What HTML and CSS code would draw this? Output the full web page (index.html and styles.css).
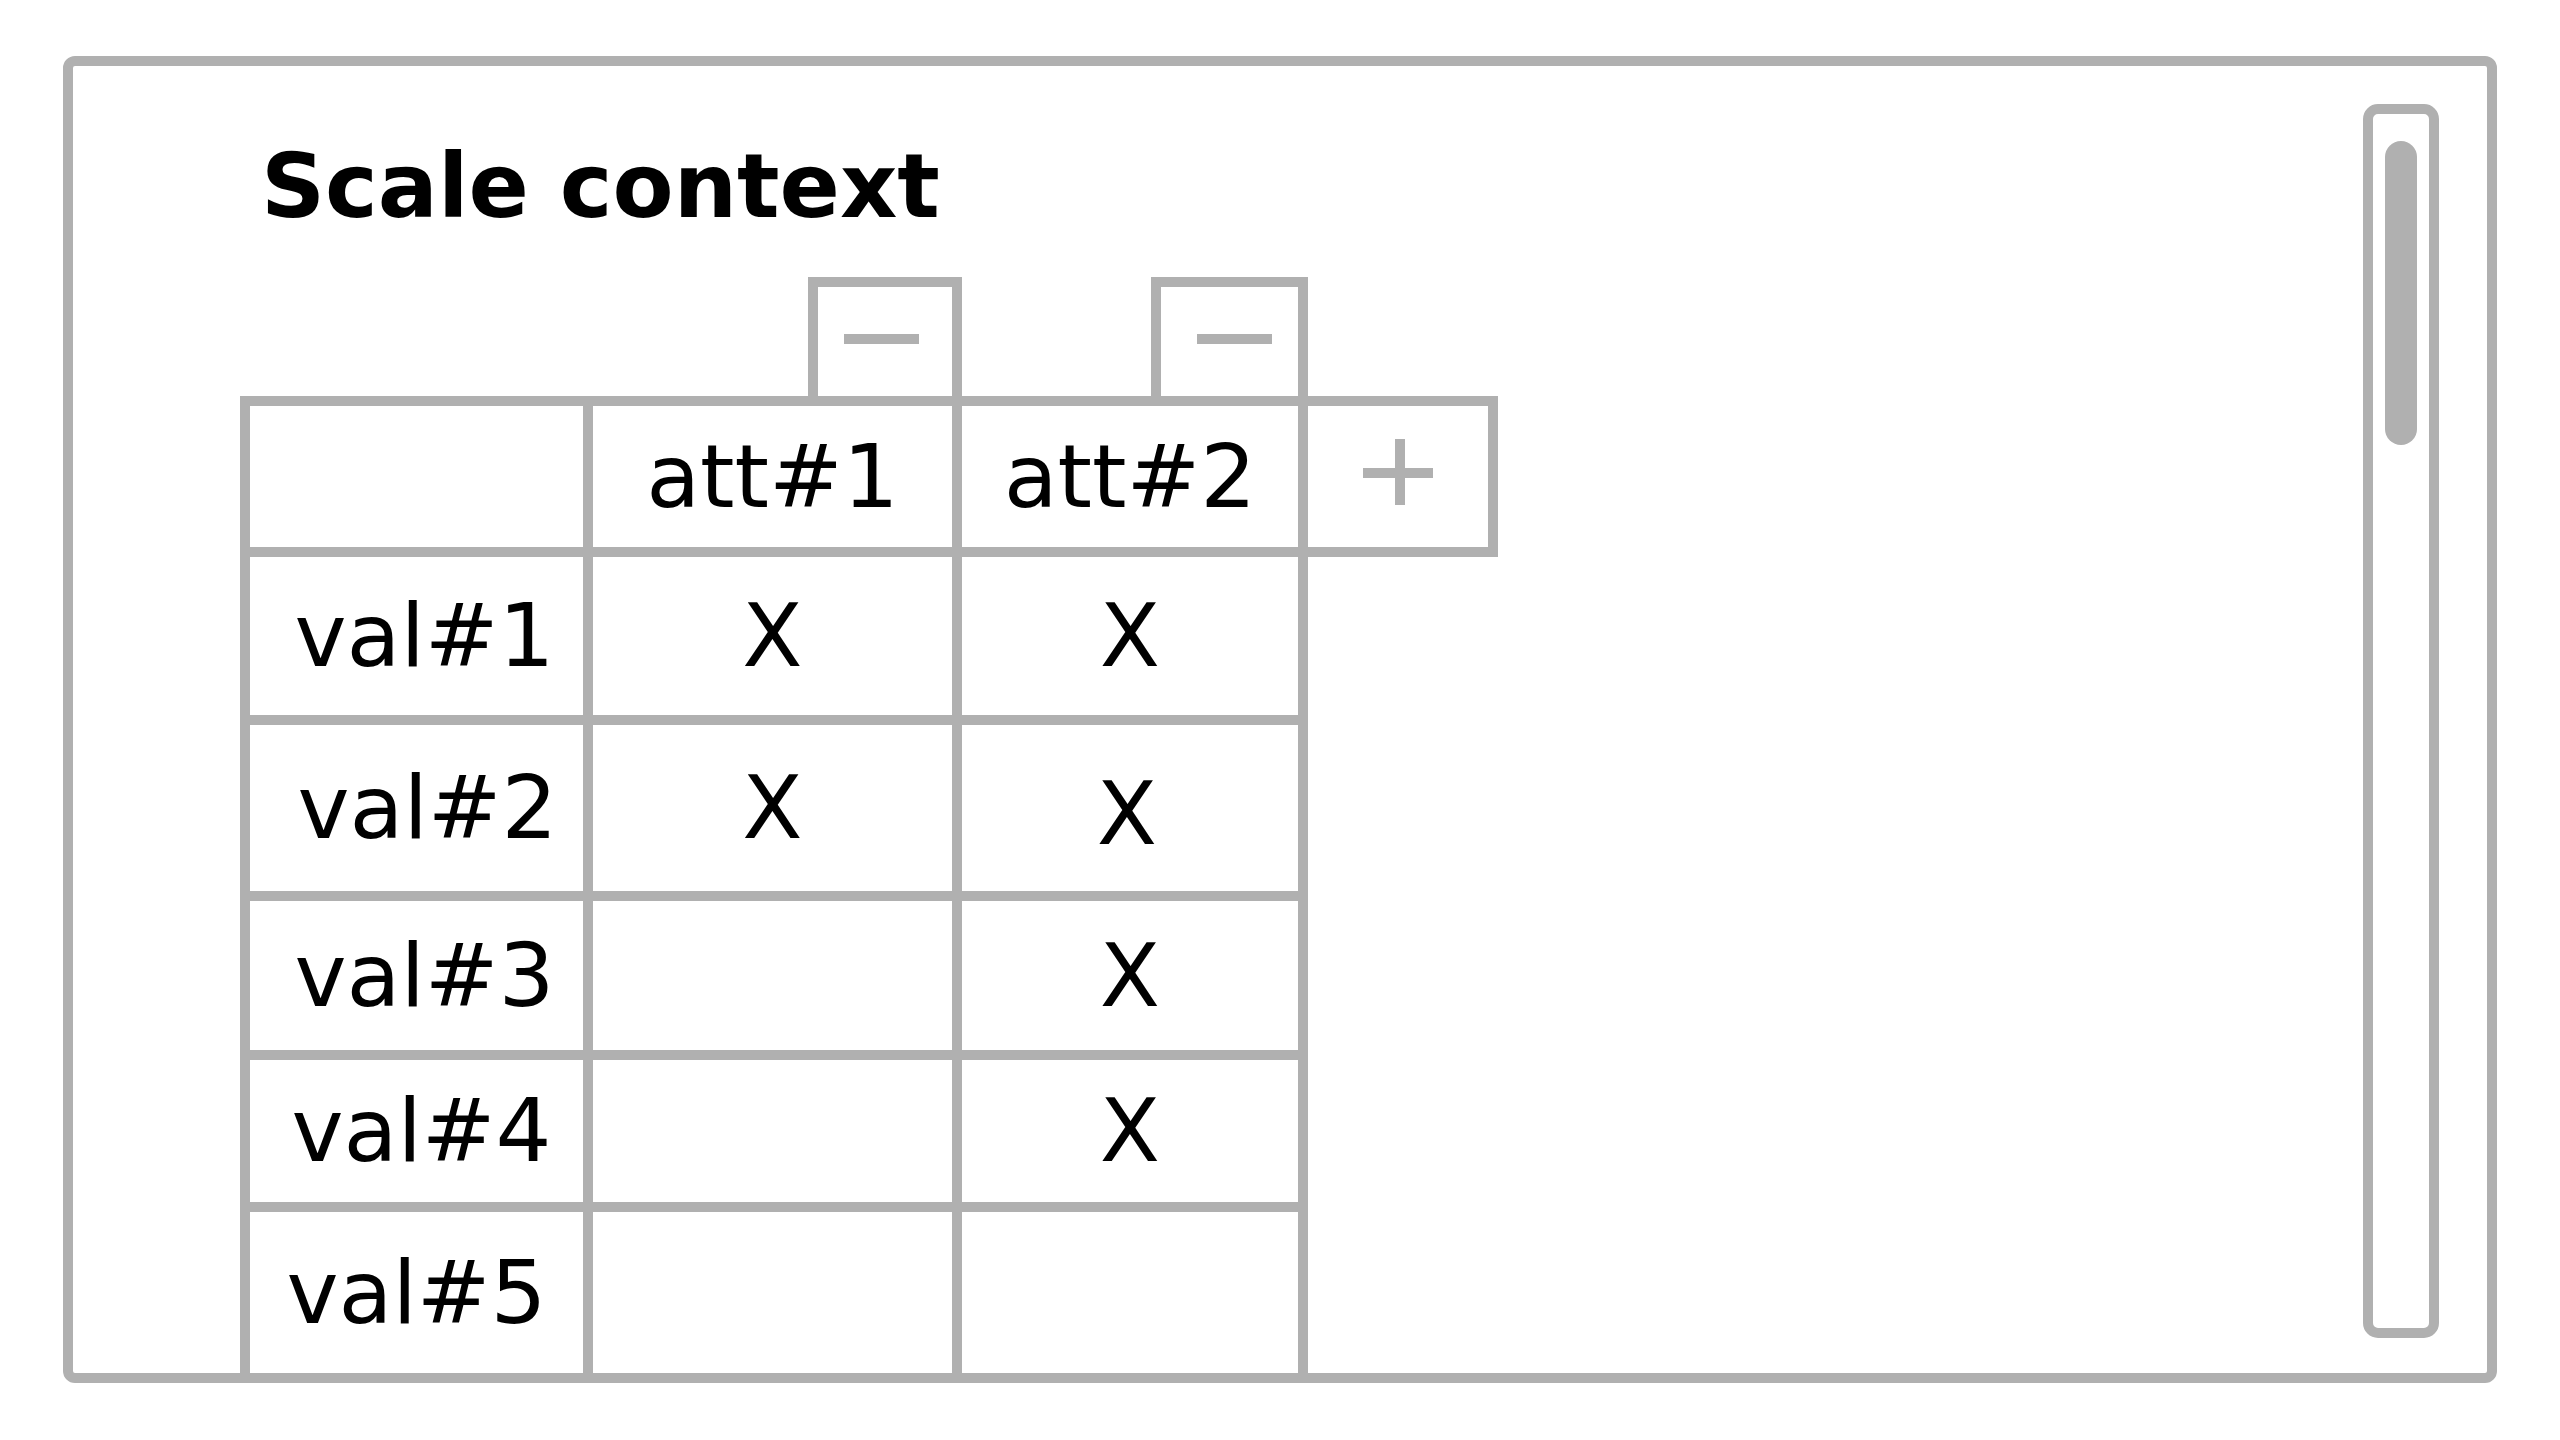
FILE: index.html
```html
<!DOCTYPE html>
<html lang="en">
<head>
  <meta charset="UTF-8">
  <title>Scale context</title>
  <link rel="stylesheet" href="styles.css">
</head>
<body>
  <div class="frame">
    <div class="content">
      <h1 class="title">Scale context</h1>

      <div class="matrix">
        <!-- remove buttons above the attribute columns -->
        <div></div>
        <div class="btn-slot"><div class="remove-btn"><span class="minus"></span></div></div>
        <div class="btn-slot second"><div class="remove-btn"><span class="minus"></span></div></div>
        <div></div>

        <!-- header -->
        <div class="cell head first"></div>
        <div class="cell head">att#1</div>
        <div class="cell head">att#2</div>
        <div class="cell head add">
          <svg class="plus" width="70" height="66" viewBox="0 0 70 66">
            <rect x="32" y="0" width="10" height="66" fill="#b0b0b0"/>
            <rect x="0" y="29" width="70" height="10" fill="#b0b0b0"/>
          </svg>
        </div>

        <div class="cell first nudge-1">val#1</div>
        <div class="cell">X</div>
        <div class="cell">X</div>
        <div></div>

        <div class="cell first nudge-2">val#2</div>
        <div class="cell">X</div>
        <div class="cell low">X</div>
        <div></div>

        <div class="cell first nudge-1">val#3</div>
        <div class="cell"></div>
        <div class="cell">X</div>
        <div></div>

        <div class="cell first nudge-3">val#4</div>
        <div class="cell"></div>
        <div class="cell">X</div>
        <div></div>

        <div class="cell first last">val#5</div>
        <div class="cell last"></div>
        <div class="cell last"></div>
        <div></div>
      </div>
    </div>

    <div class="scrollbar">
      <div class="thumb"></div>
    </div>
  </div>
</body>
</html>
```

FILE: styles.css
```css
body {
  margin: 0;
  padding: 56px 0 0 63px;
  background-color: #fff;
  font-family: "DejaVu Sans", "Liberation Sans", sans-serif;
  color: #000;
}

.frame {
  box-sizing: border-box;
  width: 2434px;
  height: 1327px;
  border: 10px solid #b0b0b0;
  border-radius: 12px;
  background-color: #fff;
  display: flex;
  overflow: hidden;
}

.content {
  flex: 1;
  padding-left: 167px;
}

.title {
  margin: 75px 0 46px 21px;
  font-size: 89px;
  line-height: 90px;
  font-weight: bold;
}

.matrix {
  display: grid;
  grid-template-columns: 353px 369px 346px 190px;
  grid-template-rows: 119px 161px 168px 176px 159px 152px 161px;
}

.btn-slot {
  display: flex;
  justify-content: flex-end;
}

.remove-btn {
  box-sizing: border-box;
  width: 154px;
  height: 119px;
  border: 10px solid #b0b0b0;
  border-bottom: none;
  display: flex;
  align-items: center;
  justify-content: center;
}

.minus {
  display: block;
  width: 75px;
  height: 10px;
  margin: 0 8px 6px 0;
  background-color: #b0b0b0;
}

.second .remove-btn {
  width: 157px;
}

.second .minus {
  margin: 0 0 6px 9px;
}

.cell {
  box-sizing: border-box;
  border-right: 10px solid #b0b0b0;
  border-bottom: 10px solid #b0b0b0;
  display: flex;
  align-items: center;
  justify-content: center;
  font-size: 88px;
  line-height: 1;
}

.cell.first {
  border-left: 10px solid #b0b0b0;
}

.cell.head {
  border-top: 10px solid #b0b0b0;
}

.cell.last {
  border-bottom: none;
}

/* the sketch is hand drawn, labels sit a bit off centre */
.nudge-1 {
  padding-left: 16px;
}

.nudge-2 {
  padding-left: 22px;
}

.nudge-3 {
  padding-left: 10px;
}

.low {
  padding: 12px 6px 0 0;
}

.add .plus {
  display: block;
  margin-bottom: 10px;
}

.scrollbar {
  box-sizing: border-box;
  width: 76px;
  margin: 38px 48px 35px 0;
  border: 10px solid #b0b0b0;
  border-radius: 15px;
  padding-top: 27px;
}

.thumb {
  width: 32px;
  height: 304px;
  margin: 0 auto;
  border-radius: 16px;
  background-color: #b0b0b0;
}
```
